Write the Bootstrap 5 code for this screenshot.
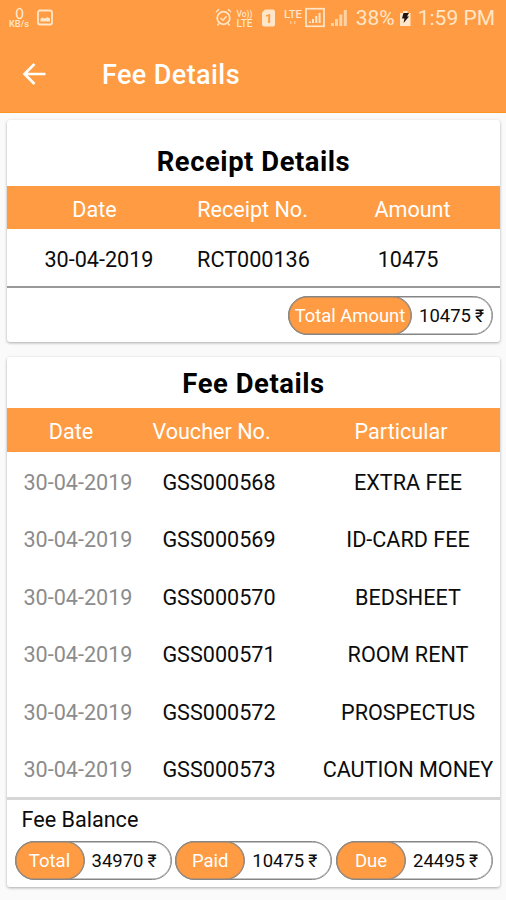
<!DOCTYPE html>
<html lang="en">
<head>
<meta charset="utf-8">
<meta name="viewport" content="width=device-width, initial-scale=1">
<title>Fee Details</title>
<link rel="stylesheet" href="https://cdn.jsdelivr.net/npm/bootstrap@5.3.0/dist/css/bootstrap.min.css">
<style>
  :root { --brand: #ff9b42; --edge: #858585; }
  body { font-family: Roboto, "Noto Sans", sans-serif; background: #fafafa; color: #0c0c0c; font-size: 21.6px; line-height: 1; height: 900px; overflow: hidden; }
  .app-top { background: var(--brand); height: 113px; border-bottom: 1px solid #ff9320; color: #fff; }
  .status { height: 36px; color: #ffe6c8; padding: 0 11px 0 8px; }
  .status svg { display: block; flex: none; }
  .status-text { font-size: 21px; white-space: nowrap; }
  .signals { margin-right: 2px; }
  .clock { margin-left: 6px; }
  .toolbar { height: 76px; padding-left: 22px; }
  .toolbar h1 { font-size: 27px; font-weight: 500; letter-spacing: .4px; margin: 3px 0 0 55px; line-height: 1; }
  .panel { background: #fff; border-radius: 3px; box-shadow: 0 1px 3px rgba(0,0,0,.32); margin: 0 6px 0 7px; }
  .receipt { margin-top: 7px; height: 222px; }
  .fees { margin-top: 15px; height: 530px; }
  .panel h2 { font-size: 27.4px; font-weight: 700; letter-spacing: .55px; margin: 0; line-height: 1; color: #000; }
  .receipt h2 { height: 66px; padding-top: 29px; }
  .fees h2 { height: 51px; padding-top: 14px; }
  .cells { display: grid; align-items: center; text-align: center; white-space: nowrap; }
  .head { background: var(--brand); color: #fff; height: 43px; padding-top: 4px; }
  .fees .head { height: 44px; padding-top: 3px; }
  .receipt .head { grid-template-columns: 175px 141px 1fr; }
  .receipt .head span:last-child { padding-left: 2px; }
  .receipt .entry { grid-template-columns: 184px 125px 1fr; height: 59px; border-bottom: 2px solid #999; padding-top: 4px; }
  .fees .head { grid-template-columns: 128px 153px 1fr; }
  .fees .head span:last-child { padding-left: 14px; }
  .fees .entry { grid-template-columns: 142px 140px 1fr; height: 57.6px; padding-top: 3px; }
  .fees .entry span:first-child { color: #8c8c8c; }
  .fees .entry span:last-child { padding-left: 27px; }
  .balance { border-top: 3px solid #d6d6d6; padding: 9px 7px 0 7.5px; margin-top: -1px; }
  .balance-title { padding-left: 7px; margin-bottom: 11px; }
  .pill { width: 157px; height: 39px; border: 1.6px solid var(--edge); box-shadow: inset 0 0 0 .5px var(--edge); border-radius: 20px; font-size: 18.5px; background: #fff; white-space: nowrap; }
  .pill-name { width: 70px; height: 39px; margin: -1px 0 -1px -1px; background: var(--brand); border: 1.6px solid var(--edge); box-shadow: inset 0 0 0 .5px var(--edge); border-radius: 20px; color: #fff; flex: none; padding-top: 1px; }
  .pill-wide { width: 205px; margin-right: -1px; }
  .pill-wide .pill-name { width: 124px; font-size: 18.4px; }
  .pill-value { padding: 1px 0 0 7px; }
  .rupee { font-size: 17.5px; margin-left: 4px; }
</style>
</head>
<body>
<header class="app-top">
  <div class="status d-flex align-items-center">
    <svg width="48" height="24" viewBox="0 0 48 24" fill="none" stroke="#ffe6c8">
      <ellipse cx="11.5" cy="7.500" rx="3" ry="5" stroke-width="1.7"/>
      <text x="1" y="21" font-size="8.500" font-weight="500" textLength="20" lengthAdjust="spacingAndGlyphs" fill="#ffe6c8" stroke="none">KB/s</text>
      <rect x="30" y="4.500" width="14" height="14" rx="2" stroke-width="1.800"/>
      <path d="M32.500 15.500v-3l2-1 2 1 3-1.500 2.500 1.500v3z" fill="#ffe6c8" stroke="none"/>
    </svg>
    <svg class="signals ms-auto" width="139" height="26" viewBox="216 5 139 26" fill="none" stroke="#ffe6c8">
      <circle cx="224.500" cy="18" r="6.300" stroke-width="1.700"/>
      <path d="M217 12l3-2.700M232 12l-3-2.700M221.500 18l2.500 2.300 3.500-4M220 23.500l-1.500 2M229 23.500l1.500 2" stroke-width="1.500"/>
      <g fill="#ffe6c8" stroke="none" font-size="9" font-weight="500">
        <text x="237.500" y="17" textLength="16" lengthAdjust="spacingAndGlyphs">Vo))</text>
        <text x="237.500" y="26.500" font-size="10" textLength="16" lengthAdjust="spacingAndGlyphs">LTE</text>
        <path d="M266 9.500h8a2 2 0 0 1 2 2V24.500a2 2 0 0 1-2 2h-9a2 2 0 0 1-2-2V12.500z"/>
        <text x="266" y="23" font-size="13" font-weight="700" fill="#ff9b42">1</text>
        <text x="285" y="17.500" font-size="11" textLength="18" lengthAdjust="spacingAndGlyphs">LTE</text>
        <path d="M291 21h1.500v3H291zM295 21h1.500v3H295z" opacity=".55"/>
      </g>
      <rect x="307" y="8.700" width="18" height="17.600" stroke-width="1.700"/>
      <path d="M311 23v-1.500M314 23v-4M317.300 23v-7M320.600 23V13" stroke-width="2"/>
      <path d="M333.500 26v-3M337.500 26v-7M341.800 26V14.500M346.300 26V10" stroke-width="3" opacity=".75"/>
    </svg>
    <span class="status-text">38%</span>
    <svg class="ms-1" width="13" height="20" viewBox="0 0 13 20">
      <path d="M4 3h4.500v2h3v13H1V5h3z" fill="#ffe6c8"/>
      <path d="M4.500 5H10L8 8.500h2L4.500 15l1-4.500H3z" fill="#1b1410"/>
    </svg>
    <span class="status-text clock">1:59 PM</span>
  </div>
  <div class="toolbar d-flex align-items-center">
    <svg width="25" height="24" viewBox="0 0 25 24" fill="none" stroke="#fff" stroke-width="2.600"><path d="M12.500 2L2.500 12l10 10M2.500 12H23.500"/></svg>
    <h1>Fee Details</h1>
  </div>
</header>

<main>
  <section class="panel receipt">
    <h2 class="text-center">Receipt Details</h2>
    <div class="cells head"><span>Date</span><span>Receipt No.</span><span>Amount</span></div>
    <div class="cells entry"><span>30-04-2019</span><span>RCT000136</span><span>10475</span></div>
    <div class="d-flex justify-content-end pt-2 pe-2">
      <div class="pill pill-wide d-flex align-items-center">
        <span class="pill-name d-flex align-items-center justify-content-center">Total Amount</span>
        <span class="pill-value">10475<span class="rupee">₹</span></span>
      </div>
    </div>
  </section>

  <section class="panel fees">
    <h2 class="text-center">Fee Details</h2>
    <div class="cells head"><span>Date</span><span>Voucher No.</span><span>Particular</span></div>
    <div class="cells entry"><span>30-04-2019</span><span>GSS000568</span><span>EXTRA FEE</span></div>
    <div class="cells entry"><span>30-04-2019</span><span>GSS000569</span><span>ID-CARD FEE</span></div>
    <div class="cells entry"><span>30-04-2019</span><span>GSS000570</span><span>BEDSHEET</span></div>
    <div class="cells entry"><span>30-04-2019</span><span>GSS000571</span><span>ROOM RENT</span></div>
    <div class="cells entry"><span>30-04-2019</span><span>GSS000572</span><span>PROSPECTUS</span></div>
    <div class="cells entry"><span>30-04-2019</span><span>GSS000573</span><span>CAUTION MONEY</span></div>
    <div class="balance">
      <div class="balance-title">Fee Balance</div>
      <div class="d-flex justify-content-between">
        <div class="pill d-flex align-items-center"><span class="pill-name d-flex align-items-center justify-content-center">Total</span><span class="pill-value">34970<span class="rupee">₹</span></span></div>
        <div class="pill d-flex align-items-center"><span class="pill-name d-flex align-items-center justify-content-center">Paid</span><span class="pill-value">10475<span class="rupee">₹</span></span></div>
        <div class="pill d-flex align-items-center"><span class="pill-name d-flex align-items-center justify-content-center">Due</span><span class="pill-value">24495<span class="rupee">₹</span></span></div>
      </div>
    </div>
  </section>
</main>
<script src="https://cdn.jsdelivr.net/npm/bootstrap@5.3.0/dist/js/bootstrap.bundle.min.js"></script>
</body>
</html>
